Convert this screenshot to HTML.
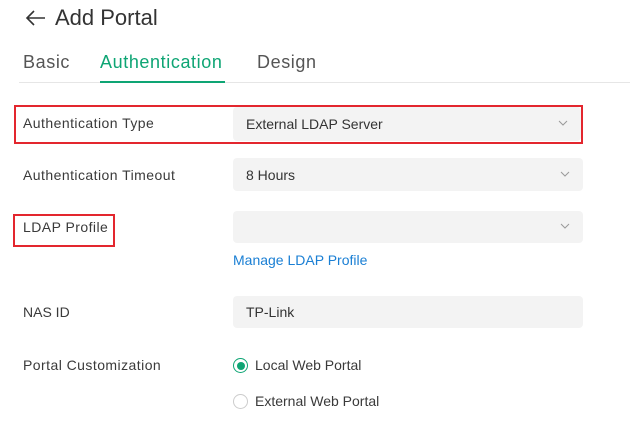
<!DOCTYPE html>
<html><head><style>
*{margin:0;padding:0;box-sizing:border-box}
body{width:630px;height:430px;background:#fff;font-family:"Liberation Sans",sans-serif;color:#333;position:relative;overflow:hidden}
.a{position:absolute;white-space:nowrap}
.lbl{font-size:14px;color:#3a3a3a;line-height:16px}
.l{letter-spacing:0.45px}
.sel{position:absolute;left:233px;width:350px;background:#f3f3f3;border-radius:4px;font-size:14px;color:#333;padding-left:13px;display:flex;align-items:center}
.chev{position:absolute;right:13px;top:50%;margin-top:-4px}
.red{position:absolute;border:2px solid #e3262e}
</style></head><body>
<svg class="a" style="left:24px;top:9px" width="22" height="18" viewBox="0 0 22 18"><path d="M10 2 L3 9 L10 16 M3 9 H21" stroke="#333" stroke-width="1.6" fill="none"/></svg>
<div class="a" style="left:55px;top:5px;font-size:22px;color:#333;line-height:26px">Add Portal</div>
<div class="a" style="left:23px;top:51px;font-size:18px;color:#555;line-height:22px;letter-spacing:0.6px">Basic</div>
<div class="a" style="left:100px;top:51px;font-size:18px;color:#0ea574;line-height:22px;letter-spacing:0.6px">Authentication</div>
<div class="a" style="left:257px;top:51px;font-size:18px;color:#555;line-height:22px;letter-spacing:0.6px">Design</div>
<div class="a" style="left:19px;top:82px;width:611px;height:1px;background:#e6e6e6"></div>
<div class="a" style="left:100px;top:81px;width:125px;height:2px;background:#0ea574"></div>

<div class="red" style="left:14px;top:105px;width:569px;height:39px"></div>
<div class="a lbl l" style="left:23px;top:115px">Authentication Type</div>
<div class="sel" style="top:107px;height:34px;width:348px">External LDAP Server<svg class="chev" width="10" height="7"><path d="M1 1 L5 5 L9 1" stroke="#999" fill="none"/></svg></div>

<div class="a lbl l" style="left:23px;top:167px">Authentication Timeout</div>
<div class="sel" style="top:158px;height:33px">8 Hours<svg class="chev" width="10" height="7"><path d="M1 1 L5 5 L9 1" stroke="#999" fill="none"/></svg></div>

<div class="red" style="left:13px;top:214px;width:102px;height:33px"></div>
<div class="a lbl l" style="left:23px;top:219px">LDAP Profile</div>
<div class="sel" style="top:211px;height:32px"><svg class="chev" width="10" height="7"><path d="M1 1 L5 5 L9 1" stroke="#999" fill="none"/></svg></div>
<div class="a" style="left:233px;top:252px;font-size:14px;color:#1a7fd4;line-height:16px">Manage LDAP Profile</div>

<div class="a lbl" style="left:23px;top:304px">NAS ID</div>
<div class="sel" style="top:296px;height:32px">TP-Link</div>

<div class="a lbl l" style="left:23px;top:357px">Portal Customization</div>
<div class="a" style="left:233px;top:358px;width:15px;height:15px;border:1.5px solid #0ea574;border-radius:50%"></div>
<div class="a" style="left:236.5px;top:361.5px;width:8px;height:8px;background:#0ea574;border-radius:50%"></div>
<div class="a lbl" style="left:255px;top:357px">Local Web Portal</div>
<div class="a" style="left:233px;top:394px;width:15px;height:15px;border:1px solid #ccc;border-radius:50%"></div>
<div class="a lbl" style="left:255px;top:393px">External Web Portal</div>
</body></html>
